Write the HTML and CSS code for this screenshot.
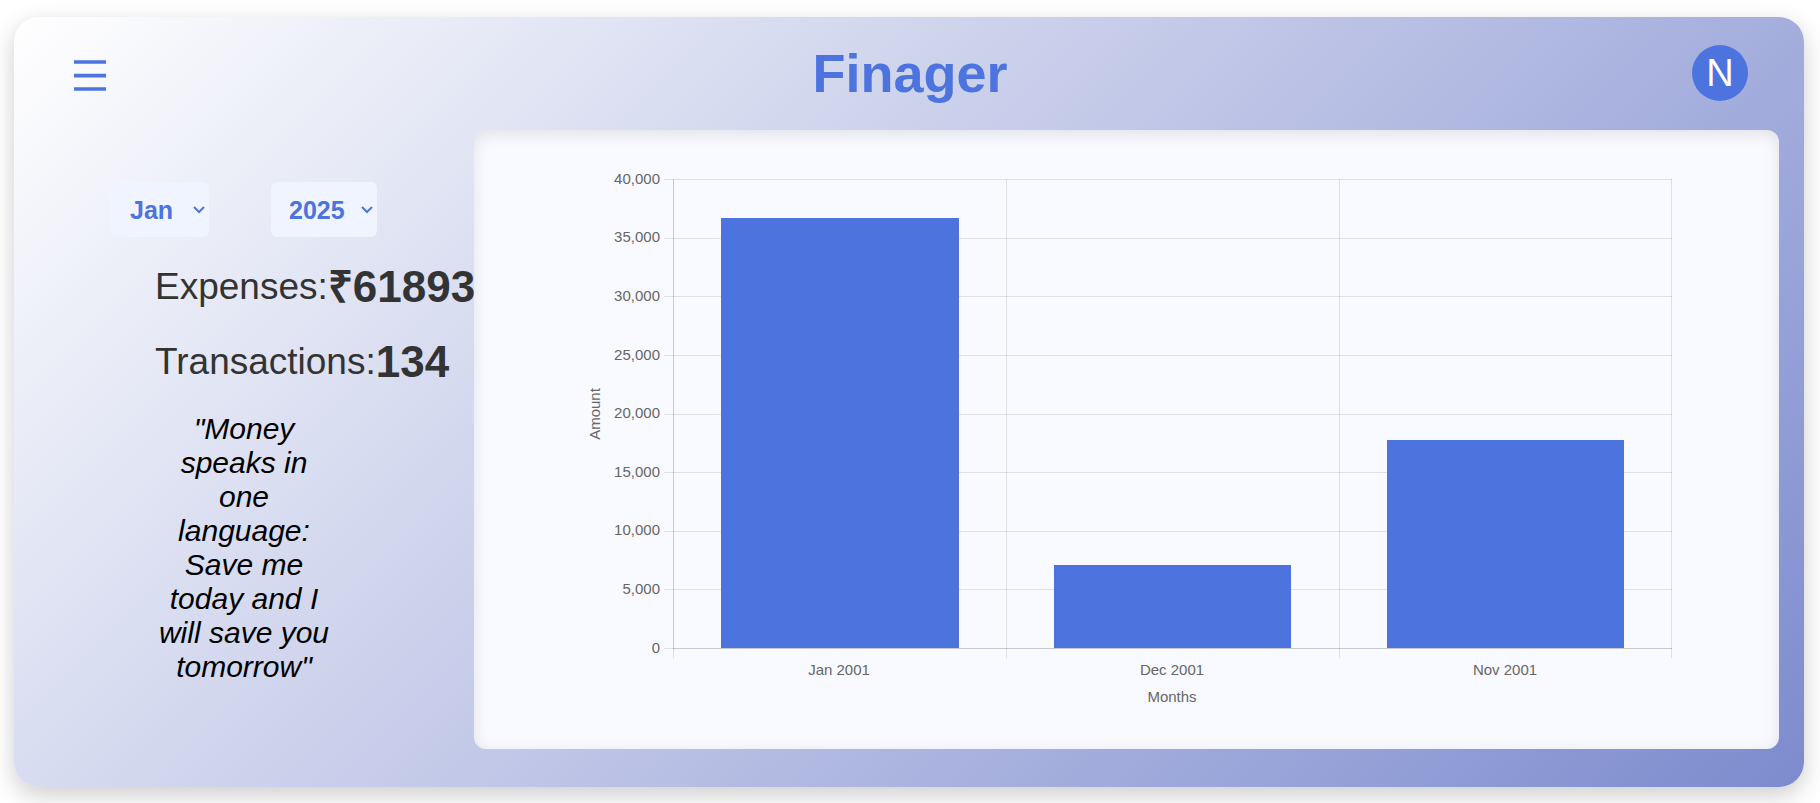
FILE: index.html
```html
<!DOCTYPE html>
<html lang="en">
<head>
<meta charset="utf-8">
<meta name="viewport" content="width=device-width, initial-scale=1">
<title>Finager</title>
<link rel="stylesheet" href="styles.css">
</head>
<body>
<div class="card">
  <header class="header">
    <button class="menu" type="button" aria-label="Menu">
      <svg class="menu-icon" viewBox="0 0 32 31" aria-hidden="true">
        <path d="M0 .2h32v3.6H0zM0 13.8h32v3.6H0zM0 27.2h32v3.6H0z"/>
      </svg>
    </button>
    <h1 class="title">Finager</h1>
    <button class="avatar" type="button" aria-label="Profile">N</button>
  </header>
  <main class="content">
    <section class="summary">
      <div class="filters">
        <select class="select select-month" aria-label="Month"><option>Jan</option></select>
        <select class="select select-year" aria-label="Year"><option>2025</option></select>
      </div>
      <p class="stat">Expenses:<strong class="value">₹61893</strong></p>
      <p class="stat">Transactions:<strong class="value">134</strong></p>
      <p class="quote">"Money speaks in one language: Save me today and I will save you tomorrow"</p>
    </section>
    <section class="panel">
      <svg class="chart" viewBox="0 0 1091 545" role="img" aria-label="Amount by month">
        <g class="grid">
          <rect x="83" y="12" width="1008" height="1"/>
          <rect x="83" y="71" width="1008" height="1"/>
          <rect x="83" y="129" width="1008" height="1"/>
          <rect x="83" y="188" width="1008" height="1"/>
          <rect x="83" y="247" width="1008" height="1"/>
          <rect x="83" y="305" width="1008" height="1"/>
          <rect x="83" y="364" width="1008" height="1"/>
          <rect x="83" y="422" width="1008" height="1"/>
          <rect x="83" y="481" width="1008" height="1"/>
          <rect x="92" y="12" width="1" height="479"/>
          <rect x="425" y="12" width="1" height="479"/>
          <rect x="758" y="12" width="1" height="479"/>
          <rect x="1090" y="12" width="1" height="479"/>
          <rect x="92" y="12" width="1" height="470"/>
          <rect x="92" y="481" width="999" height="1"/>
        </g>
        <g class="bars">
          <rect x="140" y="51" width="238" height="430"/>
          <rect x="473" y="398" width="237" height="83"/>
          <rect x="806" y="273" width="237" height="208"/>
        </g>
        <g class="label label-y">
          <text x="79" y="17">40,000</text>
          <text x="79" y="75">35,000</text>
          <text x="79" y="134">30,000</text>
          <text x="79" y="193">25,000</text>
          <text x="79" y="251">20,000</text>
          <text x="79" y="310">15,000</text>
          <text x="79" y="368">10,000</text>
          <text x="79" y="427">5,000</text>
          <text x="79" y="486">0</text>
        </g>
        <g class="label label-x">
          <text x="258" y="508">Jan 2001</text>
          <text x="591" y="508">Dec 2001</text>
          <text x="924" y="508">Nov 2001</text>
          <text x="591" y="535">Months</text>
          <text transform="translate(19 247) rotate(-90)">Amount</text>
        </g>
      </svg>
    </section>
  </main>
</div>
</body>
</html>
```

FILE: styles.css
```css
* {
  box-sizing: border-box;
}

body {
  margin: 0;
  padding: 17px 16px 16px 14px;
  background: #fff;
  font-family: "Liberation Sans", Arial, sans-serif;
}

.card {
  display: flex;
  flex-direction: column;
  min-height: calc(100vh - 33px);
  border-radius: 25px;
  background: linear-gradient(135deg, #fff, #7d8bce);
  box-shadow: 0 8px 24px rgba(0, 0, 0, 0.2);
}

.header {
  display: flex;
  align-items: center;
  justify-content: space-between;
  height: 113px;
  padding: 0 56px 2px 60px;
}

.menu {
  width: 54px;
  height: 56px;
  padding: 6px 0 0;
  border: 0;
  background: none;
  text-align: left;
  cursor: pointer;
}

.menu-icon {
  display: block;
  width: 32px;
  height: 31px;
  fill: #4d73df;
}

.title {
  margin: 0;
  color: #4d73df;
  font-size: 54px;
  line-height: 64px;
}

.avatar {
  width: 56px;
  height: 56px;
  padding: 0;
  border: 0;
  border-radius: 50%;
  background: #4d73df;
  color: #fff;
  font-family: inherit;
  font-size: 38px;
  line-height: 56px;
  cursor: pointer;
}

.content {
  display: flex;
  flex: 1;
  padding: 0 25px 38px 0;
}

.summary {
  flex: none;
  width: 460px;
  padding: 52px 0 0 96px;
}

.filters {
  display: flex;
  gap: 62px;
  margin-bottom: 25px;
}

.select {
  appearance: none;
  height: 55px;
  padding: 0 0 0 20px;
  border: 0;
  border-radius: 6px;
  background: #eff4ff url("data:image/svg+xml,%3Csvg xmlns='http://www.w3.org/2000/svg' width='12' height='8' fill='none' stroke='%234d73df' stroke-width='2'%3E%3Cpath d='M1 1l5 5 5-5'/%3E%3C/svg%3E") no-repeat right 4px center;
  color: #4d73df;
  font-family: inherit;
  font-size: 25px;
  font-weight: bold;
}

.select-month {
  width: 99px;
}

.select-year {
  width: 106px;
  padding-left: 18px;
}

.stat {
  display: flex;
  align-items: center;
  height: 50px;
  margin: 0 0 25px;
  padding-left: 45px;
  color: #333;
  font-size: 37px;
  line-height: 50px;
  white-space: nowrap;
}

.value {
  font-size: 44px;
}

.quote {
  width: 176px;
  margin: 0 0 0 46px;
  color: #000;
  font-size: 30px;
  font-style: italic;
  line-height: 34px;
  text-align: center;
}

.panel {
  flex: 1;
  min-width: 0;
  padding: 37px 107px;
  border-radius: 12px;
  background: #f8faff;
  box-shadow: inset 0 4px 16px rgba(0, 0, 0, 0.1);
}

.chart {
  display: block;
  width: 100%;
}

.grid {
  fill: rgba(0, 0, 0, 0.1);
}

.bars {
  fill: #4d73df;
}

.label {
  fill: #666;
  font-size: 15px;
}

.label-y {
  text-anchor: end;
}

.label-x {
  text-anchor: middle;
}
```
